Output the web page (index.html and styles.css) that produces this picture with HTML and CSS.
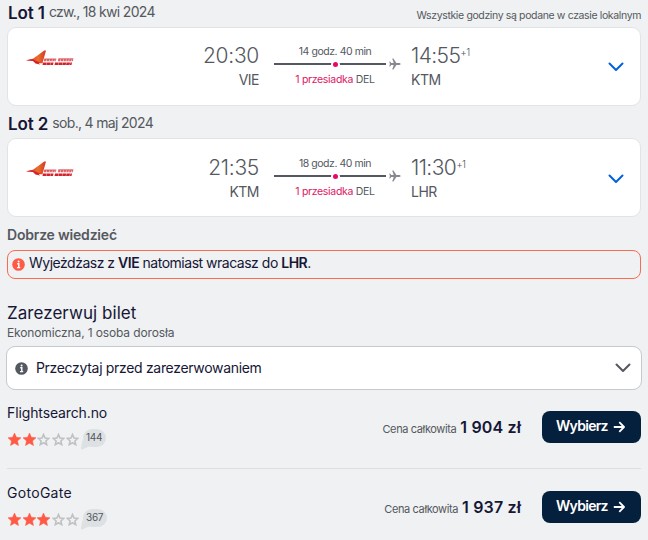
FILE: index.html
```html
<!DOCTYPE html>
<html lang="pl">
<head>
<meta charset="utf-8">
<title>Zarezerwuj bilet</title>
<link rel="stylesheet" href="styles.css">
</head>
<body>
<svg class="defs" aria-hidden="true">
  <defs>
    <linearGradient id="wing" x1="0" y1="0" x2="1" y2="0"><stop offset="0" stop-color="#d9202c"/><stop offset=".6" stop-color="#e8702a"/><stop offset="1" stop-color="#d8322a"/></linearGradient>
    <symbol id="airline" viewBox="0 0 48 16">
      <path d="M0 10.3 7 8.8 18.2.5 20 .6 16.5 13.3 11.5 13.2 9.5 12.4 7 10.8Z" fill="url(#wing)"/>
      <path d="M0 10.3 7 9.2 9 10.6 13 11.9 16 12.2 12.5 12.8 14 14.6 9.5 13.4 7 10.9Z" fill="#d6202c"/>
      <g transform="translate(2.2 0) skewX(-12)">
        <path d="M18 10.2h12M32 10.2h15" stroke="#e0666b" stroke-width="2.2" stroke-dasharray="2.3 .5"/>
        <path d="M18 9h12M32 8.8h15" stroke="#d9444b" stroke-width=".8"/>
        <path d="M17.5 13.8h10.5M29.5 13.8h17" stroke="#d3222c" stroke-width="2.6" stroke-dasharray="3.5 .35"/>
      </g>
    </symbol>
    <symbol id="plane" viewBox="0 0 12 12"><path d="M11.5 6c0-.6-.5-.9-1.2-.9H7.4L4.4.5H3.2l1.5 4.6H2.2L1.1 3.6H.3L.9 6 .3 8.4h.8l1.1-1.5h2.5l-1.5 4.6h1.2l3-4.6h2.9c.7 0 1.2-.3 1.2-.9Z" fill="#8b8795"/></symbol>
    <symbol id="chevron" viewBox="0 0 16 10"><path d="M1.5 1.5 8 8 14.5 1.5" fill="none" stroke="currentColor" stroke-width="2" stroke-linecap="round" stroke-linejoin="round"/></symbol>
    <symbol id="info" viewBox="0 0 13 13"><circle cx="6.5" cy="6.5" r="6.3" fill="currentColor"/><circle cx="6.6" cy="3.6" r="1" fill="#fff"/><path d="M5.2 5.8h1.6V9M5 9.6h3.2" fill="none" stroke="#fff" stroke-width="1.4"/></symbol>
    <symbol id="star" viewBox="0 0 13 13"><path d="m6.5 0 1.9 4.3 4.6.5-3.5 3.1 1 4.7-4-2.4-4 2.4 1-4.7L0 4.8l4.6-.5Z" fill="#ff5a45" stroke="#ff5a45" stroke-width=".5"/></symbol>
    <symbol id="star-empty" viewBox="0 0 13 13"><path d="m6.5 1.5 1.5 3.6 3.6.4-2.7 2.5.8 3.6-3.2-1.9-3.2 1.9.8-3.6-2.7-2.5 3.6-.4Z" fill="none" stroke="#c0c1c3" stroke-width="1.6"/></symbol>
    <symbol id="arrow" viewBox="0 0 12 12"><path d="M.8 6H11M6.3 1.2 11 6 6.3 10.8" fill="none" stroke="#fff" stroke-width="1.8" stroke-linejoin="round"/></symbol>
  </defs>
</svg>
<main class="page">
  <header class="leg-head">
    <p class="leg-title"><b>Lot 1</b><span class="date">czw., 18 kwi 2024</span></p>
    <span class="local">Wszystkie godziny są podane w czasie lokalnym</span>
  </header>
  <section class="card">
    <svg class="logo"><use href="#airline"/></svg>
    <div class="place depart"><span class="time">20:30</span><span class="code">VIE</span></div>
    <div class="route"><span class="dur">14 godz. 40 min</span><div class="track"><i class="dot"></i><svg class="plane"><use href="#plane"/></svg></div><span class="stop"><em>1 przesiadka</em> DEL</span></div>
    <div class="place"><span class="time">14:55<sup>+1</sup></span><span class="code">KTM</span></div>
    <svg class="chevron blue"><use href="#chevron"/></svg>
  </section>
  <header class="leg-head second">
    <p class="leg-title"><b>Lot 2</b><span class="date">sob., 4 maj 2024</span></p>
  </header>
  <section class="card lower">
    <svg class="logo"><use href="#airline"/></svg>
    <div class="place depart"><span class="time">21:35</span><span class="code">KTM</span></div>
    <div class="route"><span class="dur">18 godz. 40 min</span><div class="track"><i class="dot"></i><svg class="plane"><use href="#plane"/></svg></div><span class="stop"><em>1 przesiadka</em> DEL</span></div>
    <div class="place"><span class="time">11:30<sup>+1</sup></span><span class="code">LHR</span></div>
    <svg class="chevron blue"><use href="#chevron"/></svg>
  </section>
  <h3 class="know">Dobrze wiedzieć</h3>
  <div class="alert"><svg class="info"><use href="#info"/></svg><span>Wyjeżdżasz z <b>VIE</b> natomiast wracasz do <b>LHR</b>.</span></div>
  <h2 class="book">Zarezerwuj bilet</h2>
  <p class="cabin">Ekonomiczna, 1 osoba dorosła</p>
  <div class="read"><svg class="info"><use href="#info"/></svg><span>Przeczytaj przed zarezerwowaniem</span><svg class="chevron"><use href="#chevron"/></svg></div>
  <section class="offer">
    <div class="agent"><span class="name">Flightsearch.no</span>
      <div class="rating"><svg><use href="#star"/></svg><svg><use href="#star"/></svg><svg><use href="#star-empty"/></svg><svg><use href="#star-empty"/></svg><svg><use href="#star-empty"/></svg><span class="count">144</span></div></div>
    <p class="price"><span>Cena całkowita</span><b>1 904 zł</b></p>
    <button class="select"><span>Wybierz</span><svg><use href="#arrow"/></svg></button>
  </section>
  <section class="offer">
    <div class="agent"><span class="name wide">GotoGate</span>
      <div class="rating"><svg><use href="#star"/></svg><svg><use href="#star"/></svg><svg><use href="#star"/></svg><svg><use href="#star-empty"/></svg><svg><use href="#star-empty"/></svg><span class="count">367</span></div></div>
    <p class="price"><span>Cena całkowita</span><b>1 937 zł</b></p>
    <button class="select"><span>Wybierz</span><svg><use href="#arrow"/></svg></button>
  </section>
</main>
</body>
</html>
```
FILE: styles.css
```css
* { box-sizing: border-box; }
body { margin: 0; background: #eff1f2; color: #161636; font: 380 14px/18px Inter, "Liberation Sans", sans-serif; overflow: hidden; }
p, h2, h3 { margin: 0; }
svg { display: block; flex: none; }
.defs { position: absolute; width: 0; height: 0; }
.page { width: 648px; height: 540px; padding: 0 7px; overflow: hidden; white-space: nowrap; }
b { font-weight: 600; }

.leg-head { display: flex; justify-content: space-between; height: 27px; padding-top: 3px; }
.leg-head.second { height: 32px; padding-top: 8px; }
.leg-title { display: flex; gap: 4px; }
.leg-title b { padding-left: 1px; font-size: 17px; line-height: 21px; letter-spacing: -.1px; }
.date { color: #545860; line-height: 18px; letter-spacing: -.68px; }
.local { padding-top: 4px; color: #545860; font-size: 10.5px; letter-spacing: -.37px; }

.card { display: grid; grid-template-columns: 48px 1fr 151px 197px 16px; height: 79px; padding: 0 16px 0 18px; border: 1px solid #e1e4e6; border-radius: 9px; background: #fff; color: #545860; }
.logo { width: 48px; height: 16px; margin-top: 22px; }
.place { display: flex; flex-direction: column; padding-top: 16px; }
.depart { align-items: flex-end; }
.depart .time { letter-spacing: -.3px; }
.time { font-size: 21px; font-weight: 330; line-height: 24px; letter-spacing: -.6px; }
.time sup { font-size: 10px; line-height: 0; vertical-align: 7px; letter-spacing: -.6px; }
.code { margin-top: 3px; line-height: 18px; letter-spacing: -.5px; }
.depart { margin-right: 1px; }
.route { display: flex; flex-direction: column; margin: 17px 0 0 14px; font-size: 10.5px; line-height: 14px; letter-spacing: -.3px; }
.dur, .stop { width: 122px; text-align: center; }
.dur { letter-spacing: -.45px; }
.stop em { color: #dd1764; font-style: normal; }
.track { display: flex; align-items: center; justify-content: flex-end; position: relative; width: 127px; height: 12px; margin: -1px 0 3px; }
.track::before { content: ""; position: absolute; left: 0; top: 5px; width: 112px; height: 2px; background: #545860; }
.dot { position: absolute; left: 57px; top: 2px; width: 9px; height: 9px; border: 2px solid #fff; border-radius: 50%; background: #e70866; }
.plane { width: 12px; height: 12px; }
.chevron { width: 16px; height: 10px; color: #545860; }
.blue { margin-top: 34px; color: #0062e3; }
.lower .place { padding-top: 17px; }
.lower .route { margin-top: 18px; }
.lower .blue { margin-top: 35px; }

.know { height: 33px; padding-top: 9px; color: #545860; font-size: 14px; font-weight: 600; letter-spacing: -.2px; }
.alert { display: flex; align-items: center; gap: 4px; height: 29px; padding: 0 4px 3px; border: 1px solid #fa6b52; border-radius: 8px; letter-spacing: -.49px; }
.info { width: 13px; height: 13px; color: #545860; }
.alert .info { color: #ff5a45; margin-top: 2px; }
.book { margin-top: 24px; font-size: 17px; font-weight: 380; line-height: 20px; letter-spacing: .05px; }
.cabin { margin-top: 1px; color: #545860; font-size: 12px; line-height: 18px; letter-spacing: -.13px; }
.read { display: flex; align-items: center; height: 44px; margin: 4px -1px 0; padding: 0 10px 0 8px; border: 1px solid #c4cacf; border-radius: 9px; background: #fff; }
.read span { flex: 1; padding-left: 8px; letter-spacing: -.32px; }

.offer { display: flex; height: 78px; padding-top: 14px; }
.offer + .offer { height: 80px; border-top: 1px solid #dcdfe2; padding-top: 15px; }
.agent { flex: 1; display: flex; flex-direction: column; gap: 7px; }
.name { letter-spacing: -.12px; }
.wide { letter-spacing: .3px; }
.rating { display: flex; gap: 1.5px; height: 19px; padding: 4px 0 0 1px; }
.rating svg { width: 13px; height: 13px; }
.count { position: relative; height: 18px; margin: -4px 0 0 2px; padding: 0 3.5px; border-radius: 9px; background: #dde1e3; color: #545860; font-size: 10px; line-height: 17px; letter-spacing: -.3px; }
.count::before { content: ""; position: absolute; left: -2px; bottom: -3px; width: 10px; height: 10px; background: #dde1e3; clip-path: polygon(2px 0, 10px 6px, 0 10px); }
.price { display: flex; align-items: baseline; gap: 4px; margin-right: 21px; padding-top: 13px; line-height: 20px; }
.price span { color: #545860; font-size: 11px; letter-spacing: -.38px; }
.price b { font-size: 16px; letter-spacing: .15px; }
.select { display: flex; align-items: center; gap: 5px; width: 99px; height: 32px; margin-top: 7px; padding: 0 0 2px 14px; border: 0; border-radius: 8px; background: #05203c; color: #fff; font: 600 14px/18px Inter, "Liberation Sans", sans-serif; letter-spacing: -.7px; }
.select svg { width: 12px; height: 12px; margin-top: 2px; }
```
